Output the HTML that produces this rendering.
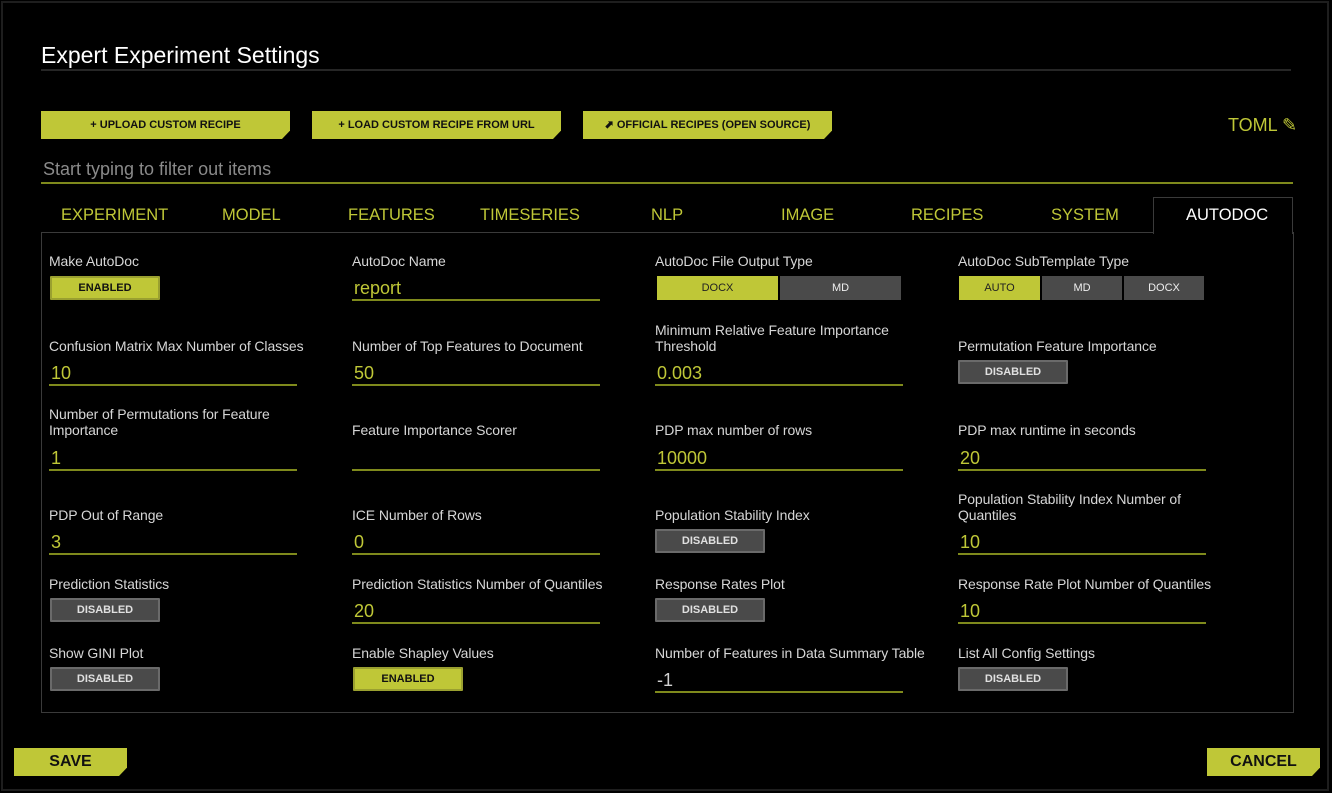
<!DOCTYPE html>
<html><head><meta charset="utf-8"><style>
*{box-sizing:border-box;margin:0;padding:0}
body{width:1332px;height:793px;background:#000;position:relative;overflow:hidden;font-family:"Liberation Sans Narrow","Liberation Sans",sans-serif;color:#d8d8d8}
.a{position:absolute;white-space:nowrap}
.frame{left:1px;top:1px;width:1328px;height:790px;border:2px solid #1e1e1e}
.lime{color:#bfc737}
.btn{background:#bfc737;color:#111;font-weight:bold;font-size:11px;text-align:center;clip-path:polygon(0 0,100% 0,100% 70%,calc(100% - 8px) 100%,0 100%)}
.lbl{font-size:14px;color:#d6d6d6;line-height:16px;letter-spacing:-0.1px}
.val{font-size:18px;color:#bfc737}
.line{height:2px;background:#7f8a1c;width:248px}
.tg{width:110px;height:24px;font-size:11px;font-weight:bold;text-align:center;line-height:20px;border:2px solid #777;border-radius:1px}
.en{background:#bfc737;color:#111;border-color:#9aa030}
.dis{background:#4a4a4a;color:#e0e0e0;border-color:#6a6a6a}
.seg{height:24px;font-size:11px;text-align:center;line-height:24px}
.tab{font-size:16.5px;color:#bfc737;top:206px}
</style></head><body>
<div class="a frame"></div>
<div class="a" style="left:41px;top:42px;font-size:23px;color:#fff">Expert Experiment Settings</div>
<div class="a" style="left:41px;top:69px;width:1250px;height:2px;background:#262626"></div>

<div class="a btn" style="left:41px;top:111px;width:249px;height:28px;line-height:28px">+ UPLOAD CUSTOM RECIPE</div>
<div class="a btn" style="left:312px;top:111px;width:249px;height:28px;line-height:28px">+ LOAD CUSTOM RECIPE FROM URL</div>
<div class="a btn" style="left:583px;top:111px;width:249px;height:28px;line-height:28px">⬈ OFFICIAL RECIPES (OPEN SOURCE)</div>
<div class="a lime" style="left:1228px;top:115px;font-size:18px">TOML ✎</div>

<div class="a" style="left:43px;top:159px;font-size:18px;color:#8a8a8a">Start typing to filter out items</div>
<div class="a" style="left:41px;top:182px;width:1252px;height:2px;background:#7f8a1c"></div>

<div class="a tab" style="left:61px">EXPERIMENT</div>
<div class="a tab" style="left:222px">MODEL</div>
<div class="a tab" style="left:348px">FEATURES</div>
<div class="a tab" style="left:480px">TIMESERIES</div>
<div class="a tab" style="left:651px">NLP</div>
<div class="a tab" style="left:781px">IMAGE</div>
<div class="a tab" style="left:911px">RECIPES</div>
<div class="a tab" style="left:1051px">SYSTEM</div>

<div class="a" style="left:41px;top:232px;width:1253px;height:481px;border:1px solid #3a3a3a"></div>
<div class="a" style="left:1153px;top:197px;width:140px;height:37px;border:1px solid #3a3a3a;border-bottom:none;background:#000"></div>
<div class="a" style="left:1186px;top:206px;font-size:16.5px;color:#fff">AUTODOC</div>

<!-- row1 -->
<div class="a lbl" style="left:49px;top:253px">Make AutoDoc</div>
<div class="a tg en" style="left:50px;top:276px">ENABLED</div>
<div class="a lbl" style="left:352px;top:253px">AutoDoc Name</div>
<div class="a val" style="left:354px;top:278px">report</div>
<div class="a line" style="left:352px;top:299px"></div>
<div class="a lbl" style="left:655px;top:253px">AutoDoc File Output Type</div>
<div class="a seg" style="left:657px;top:276px;width:121px;background:#bfc737;color:#222">DOCX</div>
<div class="a seg" style="left:780px;top:276px;width:121px;background:#4a4a4a;color:#eee">MD</div>
<div class="a lbl" style="left:958px;top:253px">AutoDoc SubTemplate Type</div>
<div class="a seg" style="left:959px;top:276px;width:81px;background:#bfc737;color:#222">AUTO</div>
<div class="a seg" style="left:1042px;top:276px;width:80px;background:#4a4a4a;color:#eee">MD</div>
<div class="a seg" style="left:1124px;top:276px;width:80px;background:#4a4a4a;color:#eee">DOCX</div>

<!-- row2 -->
<div class="a lbl" style="left:49px;top:338px">Confusion Matrix Max Number of Classes</div>
<div class="a val" style="left:51px;top:363px">10</div>
<div class="a line" style="left:49px;top:384px"></div>
<div class="a lbl" style="left:352px;top:338px">Number of Top Features to Document</div>
<div class="a val" style="left:354px;top:363px">50</div>
<div class="a line" style="left:352px;top:384px"></div>
<div class="a lbl" style="left:655px;top:322px">Minimum Relative Feature Importance<br>Threshold</div>
<div class="a val" style="left:657px;top:363px">0.003</div>
<div class="a line" style="left:655px;top:384px"></div>
<div class="a lbl" style="left:958px;top:338px">Permutation Feature Importance</div>
<div class="a tg dis" style="left:958px;top:360px">DISABLED</div>

<!-- row3 -->
<div class="a lbl" style="left:49px;top:406px">Number of Permutations for Feature<br>Importance</div>
<div class="a val" style="left:51px;top:448px">1</div>
<div class="a line" style="left:49px;top:469px"></div>
<div class="a lbl" style="left:352px;top:422px">Feature Importance Scorer</div>
<div class="a line" style="left:352px;top:469px"></div>
<div class="a lbl" style="left:655px;top:422px">PDP max number of rows</div>
<div class="a val" style="left:657px;top:448px">10000</div>
<div class="a line" style="left:655px;top:469px"></div>
<div class="a lbl" style="left:958px;top:422px">PDP max runtime in seconds</div>
<div class="a val" style="left:960px;top:448px">20</div>
<div class="a line" style="left:958px;top:469px"></div>

<!-- row4 -->
<div class="a lbl" style="left:49px;top:507px">PDP Out of Range</div>
<div class="a val" style="left:51px;top:532px">3</div>
<div class="a line" style="left:49px;top:553px"></div>
<div class="a lbl" style="left:352px;top:507px">ICE Number of Rows</div>
<div class="a val" style="left:354px;top:532px">0</div>
<div class="a line" style="left:352px;top:553px"></div>
<div class="a lbl" style="left:655px;top:507px">Population Stability Index</div>
<div class="a tg dis" style="left:655px;top:529px">DISABLED</div>
<div class="a lbl" style="left:958px;top:491px">Population Stability Index Number of<br>Quantiles</div>
<div class="a val" style="left:960px;top:532px">10</div>
<div class="a line" style="left:958px;top:553px"></div>

<!-- row5 -->
<div class="a lbl" style="left:49px;top:576px">Prediction Statistics</div>
<div class="a tg dis" style="left:50px;top:598px">DISABLED</div>
<div class="a lbl" style="left:352px;top:576px">Prediction Statistics Number of Quantiles</div>
<div class="a val" style="left:354px;top:601px">20</div>
<div class="a line" style="left:352px;top:622px"></div>
<div class="a lbl" style="left:655px;top:576px">Response Rates Plot</div>
<div class="a tg dis" style="left:655px;top:598px">DISABLED</div>
<div class="a lbl" style="left:958px;top:576px">Response Rate Plot Number of Quantiles</div>
<div class="a val" style="left:960px;top:601px">10</div>
<div class="a line" style="left:958px;top:622px"></div>

<!-- row6 -->
<div class="a lbl" style="left:49px;top:645px">Show GINI Plot</div>
<div class="a tg dis" style="left:50px;top:667px">DISABLED</div>
<div class="a lbl" style="left:352px;top:645px">Enable Shapley Values</div>
<div class="a tg en" style="left:353px;top:667px">ENABLED</div>
<div class="a lbl" style="left:655px;top:645px">Number of Features in Data Summary Table</div>
<div class="a val" style="left:657px;top:670px;color:#d0d0d0">-1</div>
<div class="a line" style="left:655px;top:691px"></div>
<div class="a lbl" style="left:958px;top:645px">List All Config Settings</div>
<div class="a tg dis" style="left:958px;top:667px">DISABLED</div>

<div class="a btn" style="left:14px;top:748px;width:113px;height:28px;line-height:28px;font-size:16px">SAVE</div>
<div class="a btn" style="left:1207px;top:748px;width:113px;height:28px;line-height:28px;font-size:16px">CANCEL</div>
</body></html>
